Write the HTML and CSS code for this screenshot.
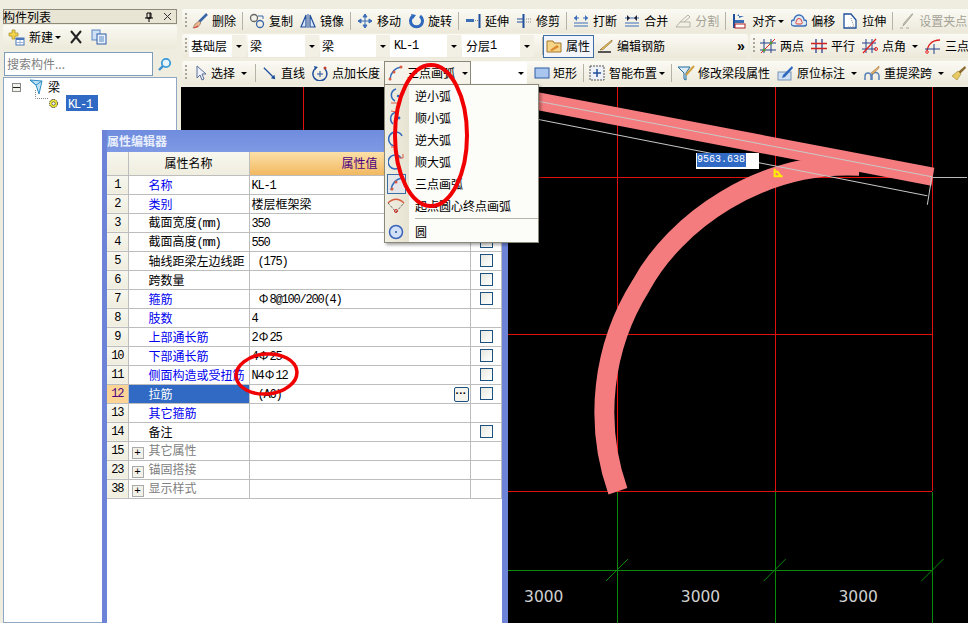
FILE: index.html
```html
<!DOCTYPE html>
<html lang="zh-CN">
<head>
<meta charset="utf-8">
<title>构件列表</title>
<link rel="stylesheet" href="styles.css">
</head>
<body>
<div class="app">
  <aside class="side">
    <div class="side-title"><span class="side-title-text">构件列表</span>
      <svg class="pin" width="10" height="10" viewBox="0 0 10 10"><path d="M3 1h4v5H3zM1 6h8M5 6v4M6 1v5" fill="none" stroke="#000"/></svg>
      <svg class="close" width="9" height="9" viewBox="0 0 9 9"><path d="M1 1l7 7M8 1L1 8" stroke="#333"/></svg>
    </div>
    <div class="side-tools">
      <svg width="17" height="17" viewBox="0 0 17 17"><path d="M4 1h3v3h3v3H7v3H4V7H1V4h3z" fill="#f3d34a" stroke="#a08a20" stroke-width=".7"/><rect x="8" y="9" width="8" height="7" fill="#fff" stroke="#4a76b8"/><path d="M8 10h8" stroke="#4a76b8" stroke-width="2"/><path d="M12 11v5M8 13.500h8" stroke="#9ab5d8"/></svg>
      <span class="side-new">新建</span><span class="caret caret-tight"></span>
      <svg class="side-x" width="14" height="14" viewBox="0 0 14 14"><path d="M2 1l10 12M12 1L2 13" stroke="#222" stroke-width="2"/></svg>
      <svg class="side-copy" width="16" height="16" viewBox="0 0 16 16"><rect x="1" y="1" width="8" height="10" fill="#cfe0f5" stroke="#5b86c4"/><rect x="6" y="5" width="9" height="10" fill="#e9f1fb" stroke="#2f5da6"/><path d="M8 8h5M8 10h5M8 12h5" stroke="#5b86c4"/></svg>
    </div>
    <div class="search-row">
      <div class="search-input">搜索构件...</div>
      <div class="search-btn"><svg width="15" height="15" viewBox="0 0 15 15"><circle cx="9" cy="6" r="4.200" fill="#e5f3fb" stroke="#3b9bd6" stroke-width="1.800"/><path d="M6 9l-4 4" stroke="#3b8fd0" stroke-width="2.400"/></svg></div>
    </div>
    <div class="tree">
      <div class="tree-row">
        <span class="tree-exp"></span>
        <svg class="tree-ico" width="14" height="16" viewBox="0 0 14 16"><path d="M1 1l12 1-3 13-3-9z" fill="#bfe3f5" stroke="#2d8ec4"/><path d="M1 1l6 5M7 6l6-4" stroke="#2d8ec4"/></svg>
        <span class="tree-label">梁</span>
      </div>
      <div class="tree-row">
        <svg class="tree-dots" width="13" height="14" viewBox="0 0 13 14"><path d="M.5 0v8.500H13" fill="none" stroke="#888" stroke-dasharray="1 1"/></svg>
        <svg class="tree-gear" width="11" height="11" viewBox="0 0 11 11"><circle cx="5.500" cy="5.500" r="4" fill="#f6ee33" stroke="#333" stroke-dasharray="1.500 .8"/><circle cx="5.500" cy="5.500" r="1.700" fill="#fff" stroke="#333" stroke-width=".7"/></svg>
        <span class="tree-sel"><span class="lat">KL-1</span></span>
      </div>
    </div>
  </aside>

  <main class="main">
    <div class="band row1">
      <span class="grip"></span>
      <span class="tool"><svg class="ico" viewBox="0 0 16 16"><path d="M15 1L7 9" stroke="#3a66a8" stroke-width="2.500"/><path d="M7 8l2 2-3 4-5 1 2-4z" fill="#e9b890" stroke="#8a6a50" stroke-width=".6"/><path d="M2 15l4-2" stroke="#d33"/></svg>删除</span>
      <span class="sep"></span>
      <span class="tool"><svg class="ico" viewBox="0 0 16 16"><circle cx="5" cy="5" r="3.500" fill="none" stroke="#666" stroke-width="1.300"/><circle cx="11" cy="11" r="3.500" fill="none" stroke="#3a66a8" stroke-width="1.300"/><path d="M9 3h5v3" fill="none" stroke="#3a66a8"/></svg>复制</span>
      <span class="tool"><svg class="ico" viewBox="0 0 16 16"><path d="M6 2L1 14h5zM10 2l5 12h-5z" fill="#d9e6f7" stroke="#204f9c" stroke-width="1.200"/><path d="M8 1v14" stroke="#204f9c"/></svg>镜像</span>
      <span class="sep"></span>
      <span class="tool"><svg class="ico" viewBox="0 0 16 16"><path d="M8 1v14M1 8h14M8 1L6 4h4zM8 15l-2-3h4zM1 8l3-2v4zM15 8l-3-2v4z" fill="#3a6fb8" stroke="#3a6fb8"/></svg>移动</span>
      <span class="tool"><svg class="ico" viewBox="0 0 16 16"><path d="M5 3a6 6 0 1 0 7 0" fill="none" stroke="#2f68bd" stroke-width="3"/><path d="M3 1l5 1-3 4z" fill="#2f68bd"/></svg>旋转</span>
      <span class="sep"></span>
      <span class="tool"><svg class="ico" viewBox="0 0 16 16"><path d="M1 6h8v3H1z" fill="#3a6fb8"/><path d="M10 7.500h3" stroke="#888" stroke-dasharray="1 1"/><path d="M14.500 1v14" stroke="#204f9c" stroke-width="2"/></svg>延伸</span>
      <span class="tool"><svg class="ico" viewBox="0 0 16 16"><path d="M1 6h6M1 9h6" stroke="#204f9c"/><path d="M7.500 1v14" stroke="#204f9c" stroke-width="2"/><path d="M10 6h5M10 9h5" stroke="#888" stroke-dasharray="1 1"/></svg>修剪</span>
      <span class="sep"></span>
      <span class="tool"><svg class="ico" viewBox="0 0 16 16"><path d="M1 5h5M10 5h5M1 13h14M1 10h14" stroke="#3a6fb8"/><path d="M1 5l3-3v6zM15 5l-3-3v6z" fill="#3a6fb8"/></svg>打断</span>
      <span class="tool"><svg class="ico" viewBox="0 0 16 16"><path d="M1 5h14M1 10h14M1 13h14" stroke="#3a6fb8"/><path d="M6 5L3 2v6zM10 5l3-3v6z" fill="#223"/></svg>合并</span>
      <span class="tool off"><svg class="ico" viewBox="0 0 16 16"><path d="M1 14l4-5h10v5zM5 9l8-7 2 2-6 5" fill="none" stroke="#b5b3a8"/></svg>分割</span>
      <span class="sep"></span>
      <span class="tool"><svg class="ico" viewBox="0 0 16 16"><path d="M2 1v14" stroke="#204f9c" stroke-width="2"/><rect x="3" y="7" width="9" height="3" fill="#3a6fb8"/><rect x="3" y="11" width="10" height="4" fill="#fff" stroke="#b02020"/><path d="M12 3H5l2-2v4z" fill="#3a6fb8"/></svg>对齐<span class="caret caret-tight"></span></span>
      <span class="tool"><svg class="ico" viewBox="0 0 16 16"><path d="M3 13a3 3 0 0 1 0-6 5 5 0 0 1 10 0 3 3 0 0 1 0 6z" fill="#ddeaf7" stroke="#3a6fb8" stroke-width="1.300"/><path d="M5.500 11a2 2 0 0 1 0-3 2.500 2.500 0 0 1 5 0 2 2 0 0 1 0 3z" fill="#fbe0dc" stroke="#d8443a"/></svg>偏移</span>
      <span class="tool"><svg class="ico" viewBox="0 0 16 16"><path d="M2 1h7l5 6v8H2z" fill="#fff" stroke="#204f9c" stroke-width="1.300"/><path d="M9 5l3 9M6 14h6" stroke="#888" stroke-dasharray="1 1"/></svg>拉伸</span>
      <span class="sep"></span>
      <span class="tool off"><svg class="ico" viewBox="0 0 16 16"><path d="M14 1L6 11l-2 2 1-3 8-9z" fill="#cfcdc2" stroke="#aaa89c"/><path d="M1 15h3M7 15h3" stroke="#aaa89c"/></svg>设置夹点</span>
    </div>

    <div class="row2">
      <div class="band band-l">
        <span class="grip"></span>
        <span class="field f-a">基础层<span class="drop"><span class="caret"></span></span></span>
        <span class="field f-b">梁<span class="drop"><span class="caret"></span></span></span>
        <span class="field f-c">梁<span class="drop"><span class="caret"></span></span></span>
        <span class="field f-d"><span class="lat">KL-1</span><span class="drop"><span class="caret"></span></span></span>
        <span class="field f-e">分层<span class="lat">1</span><span class="drop"><span class="caret"></span></span></span>
        <span class="sep sep-r2"></span>
        <span class="tool active"><svg class="ico" viewBox="0 0 16 16"><path d="M1 3h6l1 2h7v9H1z" fill="#f6d488" stroke="#a4782a"/><path d="M4 12l7-5 2 2-7 4z" fill="#d98a30"/></svg>属性</span>
        <span class="tool tool-rebar"><svg class="ico" viewBox="0 0 16 16"><path d="M15 2L5 10l-2 2 3-.5 9-8z" fill="#e8c060" stroke="#806020" stroke-width=".6"/><path d="M1 14h13" stroke="#222" stroke-width="1.500"/></svg>编辑钢筋</span>
        <span class="more">»</span>
      </div>
      <div class="band band-r">
        <span class="grip"></span>
        <span class="tool"><svg class="ico" viewBox="0 0 16 16"><path d="M4 1v14M11 1v14M0 5h16M0 12h16" stroke="#27408b"/><path d="M1 15L15 1" stroke="#e02020"/><circle cx="4" cy="12" r="1.500" fill="#4a9a30"/><circle cx="11" cy="5" r="1.500" fill="#4a9a30"/></svg>两点</span>
        <span class="tool"><svg class="ico" viewBox="0 0 16 16"><path d="M5 1v14M11 1v14" stroke="#27408b" stroke-width="1.300"/><path d="M0 5.500h16M0 10.500h16" stroke="#d02020" stroke-width="1.300"/></svg>平行</span>
        <span class="tool"><svg class="ico" viewBox="0 0 16 16"><path d="M4 1v14M10 1v14M0 5h14M0 11h14" stroke="#27408b"/><path d="M1 15L14 1" stroke="#e02020" stroke-width="1.300"/><circle cx="14" cy="11" r="1.500" fill="none" stroke="#e02020"/></svg>点角<span class="caret"></span></span>
        <span class="tool"><svg class="ico" viewBox="0 0 16 16"><path d="M2 15C2 7 7 2 15 2" fill="none" stroke="#e02020" stroke-width="1.300"/><path d="M9 6v10M0 11h15" stroke="#27408b"/><circle cx="2" cy="14" r="1.300" fill="#fff" stroke="#e02020"/></svg>三点</span>
      </div>
    </div>

    <div class="band row3">
      <span class="grip"></span>
      <span class="tool tool-select"><svg class="ico" viewBox="0 0 14 16"><path d="M3 1v12l3-3 2 5 2-1-2-5h4z" fill="#eef2fa" stroke="#5a6d9a"/></svg>选择<span class="caret"></span></span>
      <span class="sep"></span>
      <span class="tool tool-line"><svg class="ico" viewBox="0 0 16 16"><path d="M1 2l12 12" stroke="#204f9c" stroke-width="1.500"/><path d="M14 15l-5-1 4-4z" fill="#204f9c"/></svg>直线</span>
      <span class="tool"><svg class="ico" viewBox="0 0 16 16"><path d="M4 3a7 7 0 1 0 9 1" fill="none" stroke="#204f9c" stroke-width="1.500"/><path d="M8 6v6M5 9h6" stroke="#204f9c"/><circle cx="13" cy="3" r="1.500" fill="#c04030"/><path d="M2 1l4 1-3 3z" fill="#204f9c"/></svg>点加长度</span>
      <span class="arc-open"><svg class="ico" viewBox="0 0 16 16"><path d="M2 14C3 7 7 3 13 2" fill="none" stroke="#2f68bd" stroke-width="1.500"/><circle cx="2" cy="14" r="1.500" fill="#d85a40"/><circle cx="6" cy="7" r="1.500" fill="#d85a40"/><circle cx="13" cy="2" r="1.500" fill="#d85a40"/></svg><span class="arc-open-label">三点画弧</span><span class="caret"></span></span>
      <span class="blank-field"><span class="caret"></span></span>
      <span class="tool tool-rect"><svg class="ico" viewBox="0 0 16 16"><rect x="1" y="3" width="14" height="10" fill="#a9c6ef" stroke="#2f5da6"/></svg>矩形</span>
      <span class="sep"></span>
      <span class="tool tool-smart"><svg class="ico" viewBox="0 0 16 16"><rect x="1" y="1" width="14" height="14" fill="#eef1f8" stroke="#555" stroke-dasharray="2 1"/><path d="M8 4v8M4 8h8" stroke="#204f9c" stroke-width="1.500"/></svg>智能布置<span class="caret caret-tight"></span></span>
      <span class="sep"></span>
      <span class="tool tool-tight"><svg class="ico ico-wide" viewBox="0 0 18 16"><path d="M1 2h12L9 8v7l-2-1V8z" fill="#dceaf7" stroke="#1f6d9c"/><path d="M17 1L9 10" stroke="#d0a040" stroke-width="2"/></svg>修改梁段属性</span>
      <span class="tool"><svg class="ico" viewBox="0 0 16 16"><rect x="1" y="7" width="13" height="8" fill="#cfe0f2" stroke="#7a94b8"/><path d="M15 1L6 10l-1 3 3-1 8-9z" fill="#2f68bd"/></svg>原位标注<span class="caret"></span></span>
      <span class="tool"><svg class="ico" viewBox="0 0 16 16"><path d="M1 15v-4a3 3 0 0 1 6 0v4M8 15v-4a3 3 0 0 1 7 0v4" fill="none" stroke="#5a82b8" stroke-width="1.500"/><path d="M15 1L7 8l2 1 6-6z" fill="#e0b070" stroke="#a07030" stroke-width=".5"/></svg>重提梁跨<span class="caret"></span></span>
      <span class="tool"><svg class="ico" viewBox="0 0 16 16"><path d="M14 1l1 2-6 6-2-2z" fill="#8a6a30"/><path d="M7 6l3 3-4 6-5-4z" fill="#e8c860" stroke="#a08830" stroke-width=".6"/></svg></span>
    </div>

    <div class="canvas">
      <svg class="cad" viewBox="181 86 787 537" shape-rendering="crispEdges">
        <path d="M302.500 86v60M617.500 86v405M775.500 86v405M933.500 86v405M181 176.500h752M500 333.500h433M500 491.500h433" fill="none" stroke="#e01010"/>
        <path d="M617.500 492v131M775.500 492v131M933.500 492v131M500 570.500h433" fill="none" stroke="#0a8a0a"/>
        <path d="M934 176.500h34" stroke="#bbb"/>
        <g shape-rendering="geometricPrecision">
          <path d="M606 581l22-22M764 581l22-22M922 581l22-22" stroke="#0a8a0a"/>
          <path d="M500 84L935 167 932 185 500 102z" fill="#f47c7e"/>
          <path d="M618 491A238 238 0 0 1 641 285C675 222 760 160 860 165" fill="none" stroke="#f47c7e" stroke-width="20"/>
          <path d="M500 93L933 176M500 111L928 195M932.500 176L928 204" fill="none" stroke="#c9c9c9"/>
          <path d="M775 168v7.500h8M775 171h3l3 4" fill="none" stroke="#ffef00" stroke-width="2"/>
          <text class="dim" x="524" y="602">3000</text>
          <text class="dim" x="681" y="602">3000</text>
          <text class="dim" x="839" y="602">3000</text>
        </g>
      </svg>
      <div class="dim-input"><span class="dim-sel">9563.638</span></div>
    </div>
  </main>

  <section class="dialog">
    <div class="dialog-title">属性编辑器</div>
    <div class="dialog-body">
      <table class="props">
        <thead><tr><th class="num"></th><th class="name-h">属性名称</th><th class="val-h">属性值</th><th class="chk-h"></th></tr></thead>
        <tbody>
          <tr><td class="num">1</td><td class="name link">名称</td><td class="val"><span class="lat">KL-1</span></td><td class="chk"><span class="box"></span></td></tr>
          <tr><td class="num">2</td><td class="name link">类别</td><td class="val">楼层框架梁</td><td class="chk"><span class="box"></span></td></tr>
          <tr><td class="num">3</td><td class="name">截面宽度<span class="lat">(mm)</span></td><td class="val"><span class="lat">350</span></td><td class="chk"><span class="box"></span></td></tr>
          <tr><td class="num">4</td><td class="name">截面高度<span class="lat">(mm)</span></td><td class="val"><span class="lat">550</span></td><td class="chk"><span class="box"></span></td></tr>
          <tr><td class="num">5</td><td class="name">轴线距梁左边线距</td><td class="val"><span class="lat">&nbsp;(175)</span></td><td class="chk"><span class="box"></span></td></tr>
          <tr><td class="num">6</td><td class="name">跨数量</td><td class="val"></td><td class="chk"><span class="box"></span></td></tr>
          <tr><td class="num">7</td><td class="name link">箍筋</td><td class="val"><span class="lat">&nbsp;</span><span class="rb">Φ</span><span class="lat">8@100/200(4)</span></td><td class="chk"><span class="box"></span></td></tr>
          <tr><td class="num">8</td><td class="name link">肢数</td><td class="val"><span class="lat">4</span></td><td class="chk"></td></tr>
          <tr><td class="num">9</td><td class="name link">上部通长筋</td><td class="val"><span class="lat">2</span><span class="rb">Φ</span><span class="lat">25</span></td><td class="chk"><span class="box"></span></td></tr>
          <tr><td class="num">10</td><td class="name link">下部通长筋</td><td class="val"><span class="lat">4</span><span class="rb">Φ</span><span class="lat">25</span></td><td class="chk"><span class="box"></span></td></tr>
          <tr><td class="num">11</td><td class="name link">侧面构造或受扭筋</td><td class="val"><span class="lat">N4</span><span class="rb">Φ</span><span class="lat">12</span></td><td class="chk"><span class="box"></span></td></tr>
          <tr class="cur"><td class="num">12</td><td class="name">拉筋</td><td class="val val-btn"><span class="lat">&nbsp;(A6)</span><span class="more-btn">···</span></td><td class="chk"><span class="box"></span></td></tr>
          <tr><td class="num">13</td><td class="name link">其它箍筋</td><td class="val"></td><td class="chk"></td></tr>
          <tr><td class="num">14</td><td class="name">备注</td><td class="val"></td><td class="chk"><span class="box"></span></td></tr>
          <tr class="grp"><td class="num">15</td><td class="name"><span class="plus">+</span>其它属性</td><td class="val"></td><td class="chk"></td></tr>
          <tr class="grp"><td class="num">23</td><td class="name"><span class="plus">+</span>锚固搭接</td><td class="val"></td><td class="chk"></td></tr>
          <tr class="grp"><td class="num">38</td><td class="name"><span class="plus">+</span>显示样式</td><td class="val"></td><td class="chk"></td></tr>
        </tbody>
      </table>
    </div>
  </section>

  <nav class="menu">
    <div class="mi"><span class="mi-ico"><svg width="16" height="18" viewBox="0 0 16 18"><path d="M8 2C2 4 2 11 7 14" fill="none" stroke="#2f68bd" stroke-width="1.500"/><path d="M3 16h8" stroke="#d85a40"/><circle cx="10" cy="9" r="1.200" fill="#2f68bd"/></svg></span>逆小弧</div>
    <div class="mi"><span class="mi-ico"><svg width="16" height="18" viewBox="0 0 16 18"><path d="M9 3C2 4 1 11 5 15" fill="none" stroke="#2f68bd" stroke-width="1.500"/><path d="M3 2l6 1" stroke="#d85a40"/><circle cx="11" cy="9" r="1.400" fill="#2f68bd"/></svg></span>顺小弧</div>
    <div class="mi"><span class="mi-ico"><svg width="16" height="18" viewBox="0 0 16 18"><path d="M14 5A7 7 0 1 0 7 15" fill="none" stroke="#2f68bd" stroke-width="1.500"/><circle cx="7" cy="9" r="1.400" fill="#2f68bd"/><path d="M3 16h6" stroke="#d85a40"/></svg></span>逆大弧</div>
    <div class="mi"><span class="mi-ico"><svg width="16" height="18" viewBox="0 0 16 18"><path d="M12 14A7 7 0 1 1 13 5" fill="none" stroke="#2f68bd" stroke-width="1.500"/><path d="M10 5h5V1" fill="none" stroke="#d85a40"/></svg></span>顺大弧</div>
    <div class="mi"><span class="mi-ico mi-on"><svg width="16" height="16" viewBox="0 0 16 16"><path d="M2 14C3 7 7 3 13 2" fill="none" stroke="#2f68bd" stroke-width="1.500"/><circle cx="3" cy="13" r="1.500" fill="#d85a40"/><circle cx="7" cy="6" r="1.500" fill="#d85a40"/></svg></span>三点画弧</div>
    <div class="mi"><span class="mi-ico"><svg width="18" height="16" viewBox="0 0 18 16"><path d="M1 5C6 0 12 0 17 5" fill="none" stroke="#d85a40" stroke-width="1.300"/><path d="M1 5l8 9 8-9" fill="none" stroke="#333" stroke-dasharray="1 1"/><circle cx="9" cy="13" r="1.500" fill="none" stroke="#d02020"/></svg></span>起点圆心终点画弧</div>
    <div class="mi-sep"></div>
    <div class="mi"><span class="mi-ico"><svg width="16" height="16" viewBox="0 0 16 16"><circle cx="8" cy="8" r="6.500" fill="#cfe0f7" stroke="#3a62b8" stroke-width="1.500"/><circle cx="8" cy="8" r="1" fill="#2a4fa0"/></svg></span>圆</div>
  </nav>

  <svg class="marks" viewBox="0 0 968 623">
    <ellipse cx="431" cy="135.500" rx="36" ry="70.500" fill="none" stroke="#f00000" stroke-width="4"/>
    <ellipse cx="266.500" cy="374" rx="30.500" ry="20" transform="rotate(-5 266.500 374)" fill="none" stroke="#f00000" stroke-width="3.500"/>
  </svg>
</div>
</body>
</html>
```

FILE: styles.css
```css
* { box-sizing: border-box; }
html, body { margin: 0; padding: 0; }
body { background: #efede0; }

.app {
  position: relative;
  display: flex;
  width: 968px;
  height: 623px;
  overflow: hidden;
  background: #efede0;
  font: 12px/16px "Noto Sans CJK SC", "Liberation Sans", sans-serif;
  color: #000;
}
.lat {
  font-family: "Liberation Mono", "Noto Sans CJK SC", monospace;
  font-size: 12px;
  letter-spacing: -1.200px;
}
.rb { display: inline-block; width: 12px; text-align: center; }

.caret {
  display: inline-block;
  flex: none;
  width: 0;
  height: 0;
  margin-left: 6px;
  border: 3px solid transparent;
  border-top: 3px solid #000;
  border-bottom: 0;
  vertical-align: middle;
}
.caret-tight { margin-left: 2px; }

/* Left panel */
.side { flex: none; width: 180px; padding: 9px 3px 0; display: flex; flex-direction: column; }
.side-title {
  display: flex;
  flex: none;
  align-items: center;
  height: 15px;
  border: 1px solid #8d8a7b;
  background: #e8e5d5;
}
.side-title-text { flex: 1; margin-left: -1px; }
.pin { margin-right: 9px; }
.close { margin-right: 4px; }
.side-tools {
  display: flex;
  flex: none;
  align-items: center;
  height: 24px;
  margin-top: 1px;
  padding-left: 5px;
  border-radius: 3px;
  background: linear-gradient(#fbfaf4, #ecead9);
}
.side-new { margin-left: 4px; }
.side-x { margin-left: 8px; }
.side-copy { margin-left: 8px; }
.search-row { display: flex; flex: none; align-items: center; height: 24px; margin-top: 3px; }
.search-input {
  width: 149px;
  height: 24px;
  margin-left: 1px;
  padding: 3px 2px;
  border: 1px solid #7f9db9;
  background: #fff;
  color: #808080;
}
.search-btn { display: flex; margin-left: 4px; }
.tree {
  flex: 1;
  margin-top: 1px;
  padding-top: 1px;
  border: 1px solid #8fa6c4;
  background: #fff;
}
.tree-row { display: flex; align-items: center; height: 16px; }
.tree-exp {
  width: 9px;
  height: 9px;
  margin-left: 8px;
  border: 1px solid #888;
  background: linear-gradient(to bottom, transparent 3px, #222 3px, #222 4px, transparent 4px), #f2f2ea;
}
.tree-ico { margin-left: 8px; }
.tree-label { margin-left: 5px; }
.tree-dots { margin: -12px 0 0 31px; }
.tree-sel { margin-left: 7px; padding: 0 6px 0 2px; height: 16px; background: #316ac5; color: #fff; line-height: 16px; }

/* Main area */
.main { flex: 1; min-width: 0; display: flex; flex-direction: column; padding: 9px 0 0 2px; }
.band {
  display: flex;
  align-items: center;
  flex: none;
  height: 24px;
  overflow: hidden;
  white-space: nowrap;
  border-radius: 3px 0 0 3px;
  background: linear-gradient(#fbfaf4, #ece9da);
}
.row1 { gap: 7px; }
.row2 { display: flex; flex: none; gap: 2px; height: 24px; margin-top: 1px; }
.row3 { height: 24px; margin-top: 3px; gap: 7px; }
.band-l { width: 566px; flex: none; border-radius: 3px; }
.band-r { flex: 1; min-width: 0; gap: 7px; }
.grip {
  flex: none;
  width: 2px;
  height: 16px;
  margin: 0 -2px 0 3px;
  background: repeating-linear-gradient(#a9a79a 0 2px, transparent 2px 4px);
}
.tool { display: inline-flex; align-items: center; flex: none; color: #000; }
.tool.off { color: #a5a397; }
.ico { width: 16px; height: 16px; margin-right: 4px; flex: none; }
.ico-wide { width: 18px; margin-right: 3px; }
.sep { flex: none; width: 1px; height: 18px; margin: 0 -1px; background: #b5b3a6; }
.sep-r2 { margin: 0 0 0 8px; }

.field {
  position: relative;
  display: inline-flex;
  align-items: center;
  flex: none;
  height: 22px;
  padding-left: 2px;
  background: #fff;
}
.f-a { width: 57px; margin-left: 4px; }
.f-b { width: 71px; margin-left: 2px; }
.f-c { width: 70px; margin-left: 1px; }
.f-d { width: 71px; padding-left: 4px; }
.f-e { width: 72px; margin-left: 1px; padding-left: 4px; }
.drop {
  position: absolute;
  top: 0;
  right: 0;
  display: flex;
  align-items: center;
  justify-content: center;
  width: 14px;
  height: 22px;
  background: #f2f0e4;
}
.drop .caret { margin: 0; }
.active {
  height: 23px;
  width: 51px;
  padding-left: 2px;
  border: 1px solid #3a6ea5;
  background: #f3f5fb;
}
.tool-rebar { margin-left: 3px; }
.more { margin-left: 72px; font: bold 14px/16px "Liberation Sans", sans-serif; }

.tool-select { margin-left: 2px; }
.tool-select .ico { width: 14px; margin-right: 3px; }
.tool-select .caret { margin-right: 2px; }
.tool-line { margin-left: 1px; }
.tool-line .ico { width: 14px; }
.tool-rect .ico { margin-right: 3px; }
.tool-smart { margin-left: -1px; }
.arc-open {
  display: inline-flex;
  align-items: center;
  flex: none;
  height: 24px;
  width: 87px;
  margin-left: -3px;
  padding-left: 3px;
  border: 1px solid #8a8878;
  border-bottom-color: #f5f3e8;
  background: #f6f4ea;
}
.arc-open-label { margin-left: -1px; }
.arc-open .caret { margin-left: 7px; }
.blank-field {
  display: flex;
  align-items: center;
  justify-content: flex-end;
  flex: none;
  width: 56px;
  height: 22px;
  margin-left: -7px;
  padding-right: 3px;
  background: #fff;
}
.tool-tight { margin-left: -1px; }

/* Drawing canvas */
.canvas { position: relative; flex: 1; margin-top: 2px; margin-left: -1px; background: #000; overflow: hidden; }
.cad { display: block; width: 100%; height: 100%; }
.dim { font: 15.500px "DejaVu Sans", sans-serif; fill: #d0d0d0; }
.dim-input {
  position: absolute;
  left: 515px;
  top: 66px;
  width: 63px;
  height: 16px;
  padding-left: 1px;
  background: #fff;
  font: 10px/14px "Liberation Mono", monospace;
}
.dim-sel { display: inline-block; background: #316ac5; color: #fff; width: 49px; }

/* Property dialog (floating window) */
.dialog {
  position: absolute;
  left: 102px;
  top: 130px;
  width: 406px;
  height: 493px;
  padding: 0 6px 0 5px;
  display: flex;
  flex-direction: column;
  background: #6c83d8;
}
.dialog-title {
  flex: none;
  height: 22px;
  padding: 3px 0 0 0;
  font-weight: bold;
  color: #e8eefc;
  background: linear-gradient(#6f8cde, #7f9ae4);
}
.dialog-body { flex: 1; background: #fff; }
.props { width: 100%; table-layout: fixed; border-collapse: collapse; line-height: 14px; }
.props tr { height: 19px; }
.props th, .props td {
  height: 19px;
  padding: 0;
  border: 1px solid #bdbdbd;
  font-weight: normal;
  white-space: nowrap;
  overflow: hidden;
}
.props thead tr { height: 23px; }
.props thead th { height: 23px; border-top: 0; background: linear-gradient(#f8f7ef, #efedde); }
.props th.num, .props td.num {
  width: 21px;
  text-align: center;
  background: linear-gradient(#f8f7ef, #efedde);
  border-left: 0;
  font-family: "Liberation Mono", monospace;
  letter-spacing: -1.200px;
}
.props th.name-h { width: 121px; }
.props th.val-h {
  width: 221px;
  padding-left: 92px;
  text-align: left;
  color: #4b0082;
  background: linear-gradient(#fce0a8, #f1b860);
}
.props td.name { padding-left: 20px; }
.props td.link { color: #0000ee; }
.props td.val { padding-left: 2px; }
.props th.chk-h, .props td.chk { text-align: center; border-right: 1px solid #bdbdbd; }
.box {
  display: block;
  width: 13px;
  height: 13px;
  margin: 0 0 0 9px;
  border: 1px solid #1c5180;
  background: linear-gradient(135deg, #e8e8e0, #fff);
}
.props .cur .name { background: #316ac5; color: #fff; }
.props .cur .num { background: #fcd596; color: #4b0082; }
.val-btn { position: relative; }
.more-btn {
  position: absolute;
  top: 2px;
  right: 1px;
  width: 15px;
  height: 15px;
  border: 1px solid #1c5180;
  border-radius: 2px;
  background: #f4f3ec;
  font: bold 11px/11px "Liberation Sans", sans-serif;
  text-align: center;
}
.props .grp .name { padding-left: 3px; color: #808080; }
.plus {
  display: inline-block;
  width: 12px;
  height: 12px;
  margin-right: 5px;
  border: 1px solid #aaa;
  background: #f2f2ea;
  color: #000;
  font: 11px/10px "Liberation Mono", monospace;
  text-align: center;
  vertical-align: -1px;
}

/* Arc drop-down menu */
.menu {
  position: absolute;
  left: 384px;
  top: 84px;
  width: 155px;
  height: 159px;
  border: 1px solid #8a8878;
  background: linear-gradient(to right, #f1efe2 0, #e6e3d2 24px, #fcfcf8 24px);
  box-shadow: 2px 2px 3px rgba(0, 0, 0, .35);
}
.mi { display: flex; align-items: center; height: 22px; }
.mi-ico { display: flex; align-items: center; justify-content: center; width: 22px; height: 20px; margin-right: 8px; }
.mi-on { border: 1px solid #3a6ea5; background: #e4e6ea; margin-left: 2px; width: 19px; margin-right: 9px; }
.mi-sep { height: 1px; margin: 1px 0 2px 30px; background: #b8b6a8; }

/* Hand-drawn annotation rings */
.marks { position: absolute; left: 0; top: 0; width: 968px; height: 623px; pointer-events: none; }
```
